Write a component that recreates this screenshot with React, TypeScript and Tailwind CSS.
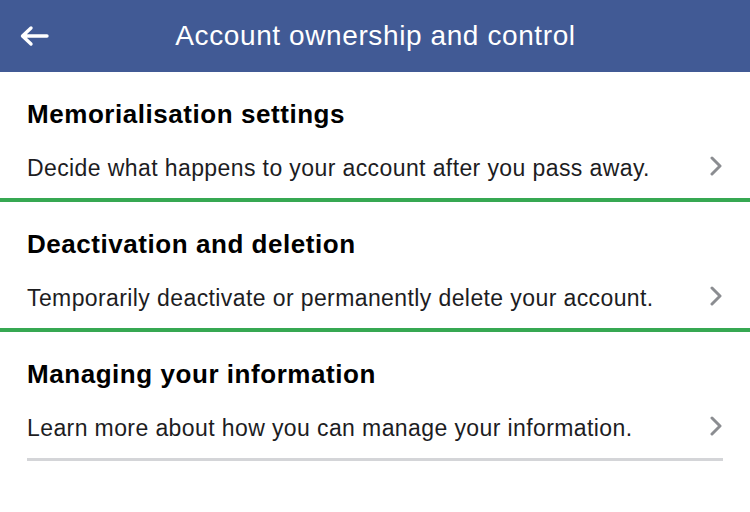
import React from "react";

const sections = [
  {
    title: "Memorialisation settings",
    desc: "Decide what happens to your account after you pass away.",
    divider: "green",
  },
  {
    title: "Deactivation and deletion",
    desc: "Temporarily deactivate or permanently delete your account.",
    divider: "green",
  },
  {
    title: "Managing your information",
    desc: "Learn more about how you can manage your information.",
    divider: "gray",
  },
];

function Chevron() {
  return (
    <svg width="12" height="20" viewBox="0 0 12 20" fill="none">
      <path d="M2 2 L10 10 L2 18" stroke="#8b8d91" strokeWidth="3" strokeLinecap="round" strokeLinejoin="round" />
    </svg>
  );
}

export default function App() {
  return (
    <div className="w-[750px] h-[512px] bg-white overflow-hidden" style={{ fontFamily: '"Liberation Sans", Arial, sans-serif' }}>
      <div className="relative h-[72px] bg-[#415a95] flex items-center justify-center">
        <svg className="absolute left-[19px] top-[25px]" width="30" height="22" viewBox="0 0 30 22" fill="none">
          <path d="M28 11 H4 M12 3 L3.5 11 L12 19" stroke="white" strokeWidth="3.4" strokeLinecap="round" strokeLinejoin="round" />
        </svg>
        <div className="text-white text-[28px] leading-[32px] tracking-[0.6px] pl-[1px]">Account ownership and control</div>
      </div>
      {sections.map((s) => (
        <div key={s.title}>
          <div className={s.divider === "gray" ? "mx-[27px] pt-[28px] pb-[17px]" : "px-[27px] pt-[28px] pb-[17px]"}>
            <div className="text-[26px] leading-[28px] tracking-[0.55px] font-bold text-black">{s.title}</div>
            <div className="mt-[27px] flex items-center justify-between">
              <div className="text-[23px] leading-[26px] tracking-[0.4px] text-[#1d1d1f]">{s.desc}</div>
              <div className="pr-[1px] -mt-[4px]">
                <Chevron />
              </div>
            </div>
          </div>
          {s.divider === "green" ? (
            <div className="h-[4px] bg-[#36a852]" />
          ) : (
            <div className="mx-[27px] h-[3px] bg-[#d4d5d8]" />
          )}
        </div>
      ))}
    </div>
  );
}
